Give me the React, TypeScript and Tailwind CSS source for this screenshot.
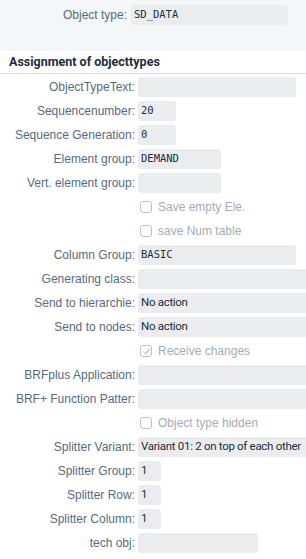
import type { ReactNode } from 'react';

type Row =
  | { kind: 'field'; label: string; value?: string; mono?: boolean; width: string }
  | { kind: 'check'; text: string; checked?: boolean };

const rows: Row[] = [
  { kind: 'field', label: 'ObjectTypeText:', width: 'w-[158px]' },
  { kind: 'field', label: 'Sequencenumber:', value: '20', mono: true, width: 'w-[38px]' },
  { kind: 'field', label: 'Sequence Generation:', value: '0', mono: true, width: 'w-[38px]' },
  { kind: 'field', label: 'Element group:', value: 'DEMAND', mono: true, width: 'w-[83px]' },
  { kind: 'field', label: 'Vert. element group:', width: 'w-[83px]' },
  { kind: 'check', text: 'Save empty Ele.' },
  { kind: 'check', text: 'save Num table' },
  { kind: 'field', label: 'Column Group:', value: 'BASIC', mono: true, width: 'w-[158px]' },
  { kind: 'field', label: 'Generating class:', width: 'w-[180px]' },
  { kind: 'field', label: 'Send to hierarchie:', value: 'No action', width: 'w-[180px]' },
  { kind: 'field', label: 'Send to nodes:', value: 'No action', width: 'w-[180px]' },
  { kind: 'check', text: 'Receive changes', checked: true },
  { kind: 'field', label: 'BRFplus Application:', width: 'w-[180px]' },
  { kind: 'field', label: 'BRF+ Function Patter:', width: 'w-[180px]' },
  { kind: 'check', text: 'Object type hidden' },
  { kind: 'field', label: 'Splitter Variant:', value: 'Variant 01: 2 on top of each other', width: 'w-[180px]' },
  { kind: 'field', label: 'Splitter Group:', value: '1', width: 'w-[23px]' },
  { kind: 'field', label: 'Splitter Row:', value: '1', width: 'w-[23px]' },
  { kind: 'field', label: 'Splitter Column:', value: '1', width: 'w-[23px]' },
  { kind: 'field', label: 'tech obj:', width: 'w-[120px]' },
];

const sans = "font-['Liberation_Sans',Arial,sans-serif]";
const roboto = "font-['Roboto',Arial,sans-serif]";
const mono = "font-['DejaVu_Sans_Mono',monospace]";

function Field({ value, isMono, width }: { value?: string; isMono?: boolean; width: string }) {
  return (
    <div
      className={`h-[20px] ${width} shrink-0 rounded-[3px] bg-[#ebecee] pl-[3px] flex items-center whitespace-nowrap overflow-hidden text-[#1d2d3e] ${
        isMono ? `${mono} text-[10.5px]` : `${roboto} text-[11.5px] tracking-[-0.3px]`
      }`}
    >
      {value}
    </div>
  );
}

function Line({ label, children }: { label: string; children: ReactNode }) {
  return (
    <div className="flex items-center h-[24px]">
      <div className="w-[135px] shrink-0 text-right text-[12px] text-[#556b82] whitespace-nowrap">{label}</div>
      <div className="ml-[3px]">{children}</div>
    </div>
  );
}

function Check({ text, checked }: { text: string; checked?: boolean }) {
  return (
    <div className="flex items-center h-[24px] pl-[140px]">
      <span className="w-[12px] h-[12px] rounded-[3px] border border-[#b9c2cb] bg-white flex items-center justify-center">
        {checked && (
          <svg width="9" height="9" viewBox="0 0 10 10" fill="none">
            <path d="M1.5 5.2 L4 7.6 L8.6 2.2" stroke="#8fa3b8" strokeWidth="1.1" />
          </svg>
        )}
      </span>
      <span className="ml-[6px] text-[12px] text-[#a4acb5]">{text}</span>
    </div>
  );
}

export default function App() {
  return (
    <div className={`w-[306px] h-[559px] overflow-hidden bg-white ${sans}`}>
      <div className="bg-[#f5f6f7] h-[51px] pt-[5px]">
        <div className="flex items-center h-[20px]">
          <div className="w-[127px] text-right text-[12px] text-[#556b82]">Object type:</div>
          <div className="ml-[4px]">
            <Field value="SD_DATA" isMono width="w-[157px]" />
          </div>
        </div>
      </div>
      <div className="h-[23px] border-b border-[#d5dadd] pl-[9px] flex items-center">
        <span className={`${roboto} text-[12.5px] font-bold text-[#1d2d3e]`}>Assignment of objecttypes</span>
      </div>
      <div className="pt-[1px]">
        {rows.map((r, i) =>
          r.kind === 'field' ? (
            <Line key={i} label={r.label}>
              <Field value={r.value} isMono={r.mono} width={r.width} />
            </Line>
          ) : (
            <Check key={i} text={r.text} checked={r.checked} />
          )
        )}
      </div>
    </div>
  );
}
